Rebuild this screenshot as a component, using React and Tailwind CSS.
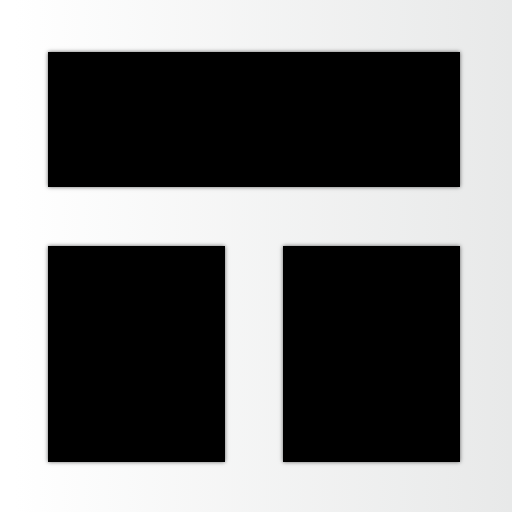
import React from "react";

const block = "bg-black shadow-[0_0_4px_rgba(0,0,0,0.6)]";

export default function App() {
  return (
    <div className="w-[512px] h-[512px] overflow-hidden bg-gradient-to-r from-white from-[3%] to-[#e8e9e9] pl-12 pr-[52px] pt-[52px] flex flex-col gap-[59px]">
      <div className={`h-[135px] ${block}`} />
      <div className="flex gap-[58px]">
        <div className={`w-[177px] h-[216px] ${block}`} />
        <div className={`w-[177px] h-[216px] ${block}`} />
      </div>
    </div>
  );
}
